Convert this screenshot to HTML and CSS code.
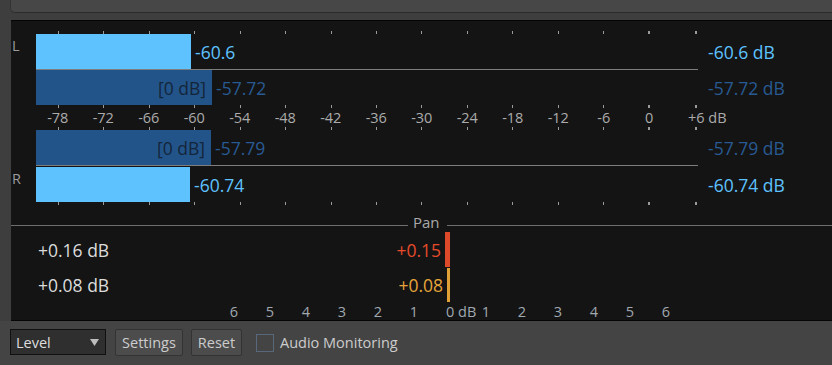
FILE: index.html
```html
<!DOCTYPE html>
<html lang="en">
<head>
    <meta charset="UTF-8">
    <meta name="viewport" content="width=device-width, initial-scale=1.0">
    <title>Audio Meters</title>
    <link rel="stylesheet" href="styles.css">
</head>
<body>
    <div class="top-panel"></div>
    <div class="top-gap"></div>

    <div class="meters">
        <!-- level meters -->
        <div class="levels">
            <div class="tick-row">
                <i class="tick"></i><i class="tick"></i><i class="tick"></i><i class="tick"></i><i class="tick"></i>
                <i class="tick"></i><i class="tick"></i><i class="tick"></i><i class="tick"></i><i class="tick"></i>
                <i class="tick"></i><i class="tick"></i><i class="tick"></i><i class="tick major"></i><i class="tick major"></i>
            </div>

            <div class="chan-row">
                <div class="ch">L</div>
                <div class="track">
                    <div class="bar peak" style="width:155px"></div>
                    <span class="val peak-text">-60.6</span>
                </div>
                <div class="readout peak-text">-60.6 dB</div>
            </div>
            <div class="sep"></div>
            <div class="chan-row">
                <div class="ch"></div>
                <div class="track">
                    <div class="bar rms" style="width:176px"><span class="ref">[0 dB]</span></div>
                    <span class="val rms-text">-57.72</span>
                </div>
                <div class="readout rms-text">-57.72 dB</div>
            </div>

            <div class="tick-row">
                <i class="tick"></i><i class="tick"></i><i class="tick"></i><i class="tick"></i><i class="tick"></i>
                <i class="tick"></i><i class="tick"></i><i class="tick"></i><i class="tick"></i><i class="tick"></i>
                <i class="tick"></i><i class="tick"></i><i class="tick"></i><i class="tick major"></i><i class="tick major"></i>
            </div>
            <div class="scale-row">
                <span>-78</span><span>-72</span><span>-66</span><span>-60</span><span>-54</span>
                <span>-48</span><span>-42</span><span>-36</span><span>-30</span><span>-24</span>
                <span>-18</span><span>-12</span><span>-6</span><span>0</span><span class="last">+6 dB</span>
            </div>
            <div class="tick-row">
                <i class="tick"></i><i class="tick"></i><i class="tick"></i><i class="tick"></i><i class="tick"></i>
                <i class="tick"></i><i class="tick"></i><i class="tick"></i><i class="tick"></i><i class="tick"></i>
                <i class="tick"></i><i class="tick"></i><i class="tick"></i><i class="tick major"></i><i class="tick major"></i>
            </div>

            <div class="chan-row">
                <div class="ch"></div>
                <div class="track">
                    <div class="bar rms" style="width:175px"><span class="ref">[0 dB]</span></div>
                    <span class="val rms-text">-57.79</span>
                </div>
                <div class="readout rms-text">-57.79 dB</div>
            </div>
            <div class="sep"></div>
            <div class="chan-row low">
                <div class="ch">R</div>
                <div class="track">
                    <div class="bar peak" style="width:154px"></div>
                    <span class="val peak-text">-60.74</span>
                </div>
                <div class="readout peak-text">-60.74 dB</div>
            </div>

            <div class="tick-row">
                <i class="tick"></i><i class="tick"></i><i class="tick"></i><i class="tick"></i><i class="tick"></i>
                <i class="tick"></i><i class="tick"></i><i class="tick"></i><i class="tick"></i><i class="tick"></i>
                <i class="tick"></i><i class="tick"></i><i class="tick"></i><i class="tick major"></i><i class="tick major"></i>
            </div>
        </div>

        <!-- pan -->
        <div class="pan">
            <div class="pan-head">
                <div class="rule left"></div>
                <span class="pan-title">Pan</span>
                <div class="rule right"></div>
            </div>
            <div class="pan-row">
                <div class="pan-left">
                    <span class="pan-label">+0.16 dB</span>
                    <span class="pan-val red">+0.15</span>
                    <div class="pan-bar red-bar" style="width:5px"></div>
                </div>
            </div>
            <div class="pan-row second">
                <div class="pan-left">
                    <span class="pan-label">+0.08 dB</span>
                    <span class="pan-val yellow">+0.08</span>
                    <div class="pan-bar yellow-bar" style="width:3px"></div>
                </div>
            </div>
            <div class="pan-scale">
                <span>6</span><span>5</span><span>4</span><span>3</span><span>2</span><span>1</span>
                <span class="zero">0 dB</span>
                <span>1</span><span>2</span><span>3</span><span>4</span><span>5</span><span>6</span>
            </div>
        </div>
    </div>

    <div class="toolbar">
        <div class="select">
            <span>Level</span>
            <svg width="9" height="7" viewBox="0 0 9 7"><polygon points="0,0 9,0 4.5,7" fill="#bdbdbd"/></svg>
        </div>
        <button class="btn settings">Settings</button>
        <button class="btn reset">Reset</button>
        <label class="check">
            <span class="box"></span>
            <span>Audio Monitoring</span>
        </label>
    </div>
</body>
</html>
```

FILE: styles.css
```css
* {
    margin: 0;
    padding: 0;
    box-sizing: border-box;
}

body {
    width: 832px;
    height: 365px;
    overflow: hidden;
    background: #3e3e3e;
    font-family: "Open Sans", "Noto Sans", sans-serif;
    color: #ccc;
    display: flex;
    flex-direction: column;
}

.top-panel {
    height: 13px;
    margin-left: 10px;
    background: #474747;
    border-left: 1px solid #333;
    border-bottom: 1px solid #2c2c2c;
    border-bottom-left-radius: 5px;
}

.top-gap {
    height: 7px;
}

.meters {
    margin-left: 11px;
    height: 301px;
    background: #141414;
    border-top: 1px solid #050505;
    border-bottom: 1px solid #050505;
    overflow: hidden;
}

/* level meters */
.levels {
    padding-top: 10px;
}

.tick-row {
    display: flex;
    justify-content: space-between;
    width: 639px;
    height: 3px;
    margin-left: 47px;
}

.tick {
    width: 1px;
    height: 3px;
    background: #9a9a9a;
}

.tick.major {
    width: 2px;
}

.chan-row {
    display: flex;
    height: 35px;
}

.chan-row.low {
    margin-top: 1px;
}

.ch {
    width: 25px;
    padding: 4px 0 0 1px;
    font-size: 14.5px;
    line-height: 16px;
    color: #9b9b9b;
}

.track {
    width: 662px;
    display: flex;
    align-items: center;
}

.bar {
    height: 100%;
    display: flex;
    align-items: center;
    justify-content: flex-end;
}

.bar.peak {
    background: #5ec2ff;
}

.bar.rms {
    background: #225489;
}

.ref {
    padding-right: 6px;
    font-size: 17.5px;
    color: #14253a;
}

.val {
    margin-left: 4px;
    font-size: 17.5px;
}

.readout {
    margin-left: 10px;
    font-size: 17.5px;
    align-self: center;
    white-space: nowrap;
}

.peak-text {
    color: #5ec2ff;
}

.rms-text {
    color: #285a93;
}

.sep {
    margin-left: 25px;
    width: 662px;
    height: 1px;
    background: #7d7d7d;
}

.scale-row {
    display: flex;
    height: 19px;
    margin-left: 24px;
    font-size: 14.5px;
    line-height: 19px;
    color: #ababab;
}

.scale-row span {
    flex: 0 0 45.5px;
    min-width: 0;
    text-align: center;
    white-space: nowrap;
}

.scale-row .last {
    text-align: left;
    padding-left: 16px;
}

/* pan */
.pan-head {
    display: flex;
    align-items: flex-start;
    height: 16px;
    margin-top: 9px;
    font-size: 15px;
    line-height: 16px;
    color: #a9a9a9;
}

.rule {
    height: 1px;
    margin-top: 11px;
    background: #6e6e6e;
}

.rule.left {
    width: 397px;
}

.rule.right {
    flex: 1;
}

.pan-title {
    margin: 0 7px 0 5px;
}

.pan-row {
    height: 35px;
    margin-top: 2px;
}

.pan-row.second {
    height: 34px;
    margin-top: 1px;
}

.pan-left {
    width: 439px;
    height: 100%;
    display: flex;
    align-items: center;
}

.pan-label {
    flex: 1;
    padding-left: 27px;
    font-size: 17.5px;
    color: #dcdcdc;
}

.pan-val {
    margin-right: 4px;
    font-size: 17.5px;
}

.pan-bar {
    height: 100%;
}

.red {
    color: #e64b2b;
}

.red-bar {
    background: #dc4a29;
}

.yellow {
    color: #e6a53a;
}

.yellow-bar {
    background: #e0a035;
}

.pan-scale {
    display: flex;
    margin-left: 205px;
    font-size: 14.5px;
    line-height: 19px;
    color: #a0a8b0;
}

.pan-scale span {
    flex: 0 0 36px;
    min-width: 0;
    text-align: center;
    white-space: nowrap;
}

.pan-scale .zero {
    text-align: left;
    padding-left: 14px;
}

/* toolbar */
.toolbar {
    height: 44px;
    background: #444;
    display: flex;
    align-items: flex-start;
    padding: 8px 0 0 10px;
    font-size: 14.5px;
}

.select {
    width: 96px;
    height: 26px;
    background: #2f2f2f;
    border: 1px solid #111;
    display: flex;
    align-items: center;
    justify-content: space-between;
    padding: 0 6px 0 5px;
    color: #ddd;
}

.btn {
    height: 27px;
    margin-left: 9px;
    background: #4c4c4c;
    border: 1px solid #333;
    border-radius: 2px;
    color: #ccc;
    font: inherit;
}

.btn.settings {
    width: 68px;
}

.btn.reset {
    width: 51px;
    margin-left: 8px;
}

.check {
    display: flex;
    align-items: center;
    height: 27px;
    margin-left: 14px;
    color: #ccc;
}

.box {
    width: 18px;
    height: 18px;
    margin-right: 6px;
    border: 1px solid #56687a;
}
```
